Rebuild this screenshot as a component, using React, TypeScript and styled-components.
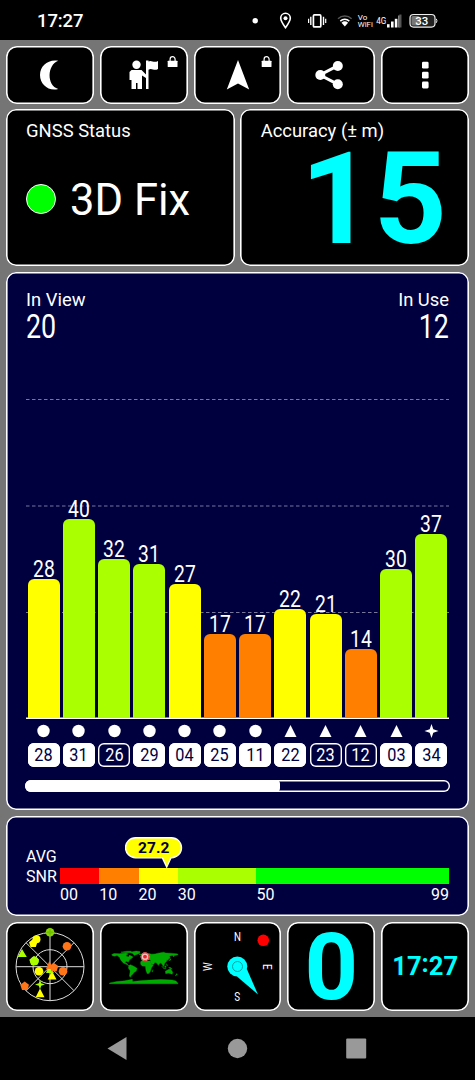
import React from "react";
import styled, { createGlobalStyle } from "styled-components";

const NAVY = "#00003f";
const CYAN = "#00ffff";
const YELLOW = "#ffff00";
const LIME = "#aaff00";
const ORANGE = "#ff8000";

const GlobalStyle = createGlobalStyle`
  * { box-sizing: border-box; }
  body { margin: 0; background: #000; font-family: Roboto, "Liberation Sans", sans-serif; color: #fff; }
  svg { display: block; }
`;

const Screen = styled.div`
  width: 475px;
  height: 1080px;
  display: flex;
  flex-direction: column;
  background: #000;
  overflow: hidden;
`;

const StatusBar = styled.header`
  height: 40px;
  display: flex;
  justify-content: space-between;
  align-items: center;
  padding: 1px 37px 0;
`;

const StatusTime = styled.span`
  font-size: 18.5px;
  font-weight: 500;
  line-height: 20px;
  letter-spacing: -0.1px;
`;

const Board = styled.main`
  height: 977px;
  padding: 6px 5.8px 0;
  background: #757575;
  display: grid;
  grid-template-rows: 57.8px 157px 538.4px 100.4px 89.4px;
  row-gap: 5.6px;
`;

const Row = styled.div<{ $cols: number }>`
  display: grid;
  grid-template-columns: repeat(${(p) => p.$cols}, 1fr);
  grid-template-rows: 100%;
  column-gap: 5.9px;
`;

const Panel = styled.section<{ $bg?: string; $radius?: number }>`
  background: ${(p) => p.$bg ?? "#000"};
  border-radius: ${(p) => p.$radius ?? 10}px;
  box-shadow: inset 0 0 0 1.6px #fff;
  min-width: 0;
`;

const StatusPanel = styled(Panel)`
  padding: 10.8px 20.3px 0;
`;

const Caption = styled.div`
  font-size: 18.4px;
  line-height: 21px;
  white-space: nowrap;
`;

const FixRow = styled.div`
  display: flex;
  align-items: center;
  gap: 14px;
  margin-top: 32px;
`;

const FixDot = styled.span`
  width: 30px;
  height: 30px;
  border-radius: 50%;
  background: #00ff00;
  border: 1px solid #fff;
`;

const FixText = styled.span`
  font-size: 43.5px;
  line-height: 48px;
  padding-top: 4px;
`;

const AccuracyValue = styled.div`
  font-size: 127.5px;
  font-weight: 700;
  line-height: 120px;
  color: ${CYAN};
  text-align: right;
  margin: -1.5px 2px 0 -10px;
`;

const ChartPanel = styled(Panel)`
  padding: 17.4px 20.2px 0;
  display: flex;
  flex-direction: column;
`;

const ChartHead = styled.div`
  display: flex;
  justify-content: space-between;
  height: 64.4px;
`;

const Count = styled.div<{ $right?: boolean }>`
  text-align: ${(p) => (p.$right ? "right" : "left")};
`;

const CountValue = styled.div<{ $right?: boolean }>`
  font-size: 32.3px;
  line-height: 34px;
  transform: scaleX(0.83);
  transform-origin: ${(p) => (p.$right ? "right" : "left")};
`;

const Plot = styled.div`
  height: 365.2px;
  display: grid;
`;

const GridLines = styled.svg`
  grid-area: 1 / 1;
  width: 423px;
  height: 365px;
`;

const Bars = styled.div`
  grid-area: 1 / 1;
  display: grid;
  grid-template-columns: repeat(12, 1fr);
  align-items: end;
  box-shadow: inset 0 -1.6px 0 #fff;
  padding-bottom: 1.4px;
`;

const BarColumn = styled.div`
  display: flex;
  flex-direction: column;
  align-items: center;
`;

const BarValue = styled.span`
  font-size: 23px;
  line-height: 18px;
  transform: scaleX(0.84);
`;

const Bar = styled.div<{ $value: number; $color: string }>`
  width: 32px;
  height: ${(p) => p.$value * 5 - 1}px;
  border-radius: 6px 6px 0 0;
  background: ${(p) => p.$color};
`;

const Satellites = styled.div`
  display: grid;
  grid-template-columns: repeat(12, 1fr);
  padding-top: 4.6px;
`;

const Satellite = styled.div`
  display: flex;
  flex-direction: column;
  align-items: center;
  gap: 5px;
`;

const SatId = styled.span<{ $used: boolean }>`
  width: 32px;
  height: 24.5px;
  border-radius: 6px;
  display: flex;
  align-items: center;
  justify-content: center;
  background: ${(p) => (p.$used ? "#fff" : NAVY)};
  color: ${(p) => (p.$used ? NAVY : "#fff")};
  box-shadow: inset 0 0 0 1.4px #fff;
  font-size: 18.7px;
  line-height: 22px;
  padding-top: 1px;
`;

const Narrow = styled.span`
  display: inline-block;
  transform: scaleX(0.87);
`;

const Progress = styled.div`
  margin: 13px -0.8px 0;
  height: 11.8px;
  border-radius: 6px;
  box-shadow: inset 0 0 0 1.4px #fff;
  overflow: hidden;
`;

const ProgressFill = styled.div`
  width: 60%;
  height: 100%;
  background: #fff;
  border-radius: 0 4px 4px 0;
`;

const SnrPanel = styled(Panel)`
  padding: 20px 20.2px 0;
  display: grid;
  grid-template-columns: 34px 1fr;
  grid-template-rows: 32px 16.4px 20px;
`;

const SnrLabel = styled.div`
  grid-row: 1 / 3;
  padding-top: 10.6px;
  font-size: 16px;
  line-height: 20.2px;
`;

const Segments = styled.div`
  grid-column: 2;
  display: grid;
  grid-template-columns: 39.2fr 39.4fr 39.2fr 78.8fr 192.6fr;
`;

const Segment = styled.div<{ $color: string }>`
  background: ${(p) => p.$color};
`;

const ScaleLabels = styled(Segments)`
  font-size: 16px;
  line-height: 21.4px;
`;

const LastLabels = styled.div`
  display: flex;
  justify-content: space-between;
`;

const BubbleArea = styled.div`
  grid-column: 2;
  padding-left: 65px;
`;

const Nav = styled.footer`
  height: 63px;
  display: flex;
  justify-content: center;
`;

const ReadoutPanel = styled(Panel)<{ $size: number }>`
  display: flex;
  align-items: center;
  justify-content: center;
  color: ${CYAN};
  font-size: ${(p) => p.$size}px;
  font-weight: 700;
  line-height: 1;
`;

const Speed = styled.span`
  padding-top: 2px;
`;

const Colon = styled.span`
  padding-bottom: 5px;
`;

type Shape = "circle" | "triangle" | "star";

const satellites: { id: string; snr: number; color: string; shape: Shape; used: boolean }[] = [
  { id: "28", snr: 28, color: YELLOW, shape: "circle", used: true },
  { id: "31", snr: 40, color: LIME, shape: "circle", used: true },
  { id: "26", snr: 32, color: LIME, shape: "circle", used: false },
  { id: "29", snr: 31, color: LIME, shape: "circle", used: true },
  { id: "04", snr: 27, color: YELLOW, shape: "circle", used: true },
  { id: "25", snr: 17, color: ORANGE, shape: "circle", used: true },
  { id: "11", snr: 17, color: ORANGE, shape: "circle", used: true },
  { id: "22", snr: 22, color: YELLOW, shape: "triangle", used: true },
  { id: "23", snr: 21, color: YELLOW, shape: "triangle", used: false },
  { id: "12", snr: 14, color: ORANGE, shape: "triangle", used: false },
  { id: "03", snr: 30, color: LIME, shape: "triangle", used: true },
  { id: "34", snr: 37, color: LIME, shape: "star", used: true },
];

const ShapeIcon = ({ shape }: { shape: Shape }) => (
  <svg width="15" height="14" viewBox="-7.5 -7 15 14" fill="#fff">
    {shape === "circle" && <circle r="6.2" />}
    {shape === "triangle" && <path d="M0-6L6 6H-6Z" />}
    {shape === "star" && <path d="M0-7L1.8-1.8L7 0L1.8 1.8L0 7L-1.8 1.8L-7 0L-1.8-1.8Z" />}
  </svg>
);

const Lock = ({ x }: { x: number }) => (
  <g transform={`translate(${x} 0)`}>
    <rect x="-4.9" y="14.7" width="9.8" height="6.4" rx="0.6" fill="#fff" />
    <path d="M-2.5 15V13.2a2.5 2.5 0 0 1 5 0V15" fill="none" stroke="#fff" strokeWidth="1.2" />
  </g>
);

const ToolIcon = ({ children }: { children: React.ReactNode }) => (
  <svg width="88" height="58" viewBox="0 0 88 58" fill="#fff">
    {children}
  </svg>
);

const StatusIcons = () => (
  <svg width="190" height="30" viewBox="248 5.5 190 30" fill="#fff">
    <circle cx="255.2" cy="20.3" r="2.7" />
    <path d="M285.5 27.2C282.5 23.2 280.7 20.4 280.7 17.6a4.8 4.8 0 0 1 9.6 0C290.3 20.4 288.5 23.2 285.5 27.2Z" fill="none" stroke="#fff" strokeWidth="1.6" />
    <circle cx="285.5" cy="17.7" r="2" />
    <g fill="none" stroke="#fff">
      <rect x="313.4" y="14.4" width="7.4" height="12" rx="1" strokeWidth="1.7" />
      <path d="M310.8 16.3V24.5M323.5 16.3V24.5" strokeWidth="1.4" />
      <path d="M308.6 18.3V22.5M325.7 18.3V22.5" strokeWidth="1.2" />
      <path d="M338 18.2a10 10 0 0 1 13.6 0" stroke="#555" strokeWidth="1.5" />
      <path d="M340.3 20.6a6.6 6.6 0 0 1 9 0" strokeWidth="1.5" />
    </g>
    <path d="M344.8 26L341.5 22.3a5 5 0 0 1 6.6 0Z" />
    <g fontFamily="Roboto, sans-serif">
      <text x="357.8" y="19.6" fontSize="7.5" textLength="9.5" lengthAdjust="spacingAndGlyphs">Vo</text>
      <text x="357.8" y="26.8" fontSize="7.5" textLength="15" lengthAdjust="spacingAndGlyphs">WiFi</text>
      <text x="376.3" y="23.5" fontSize="8.5" textLength="10" lengthAdjust="spacingAndGlyphs">4G</text>
      <rect x="410" y="14" width="25" height="12.6" rx="3.5" fill="#222" stroke="#eee" strokeWidth="1.2" />
      <rect x="411.5" y="15.5" width="8" height="9.6" rx="1.5" fill="#777" />
      <path d="M436.3 18.3q1.4 2 0 4" stroke="#eee" fill="none" />
      <text x="421.8" y="24.4" fontSize="11.5" fontWeight="500" textAnchor="middle">33</text>
    </g>
    <rect x="387" y="23.7" width="2.6" height="3.3" />
    <rect x="391" y="21" width="2.6" height="6" />
    <rect x="394.8" y="18.3" width="2.6" height="8.7" />
    <rect x="398.5" y="15" width="1" height="12" />
    <rect x="399.3" y="14" width="2.2" height="13" fill="#555" />
  </svg>
);

const SkyView = () => (
  <svg width="88" height="89" viewBox="6 922 88 89">
    <g fill="none" stroke="#ddd" strokeWidth="1">
      <circle cx="50" cy="966.7" r="34" />
      <circle cx="50" cy="966.7" r="17" />
      <path d="M50 932.7V1000.7M16 966.7H84M26 942.7L74 990.7M74 942.7L26 990.7" />
    </g>
    <g fill={YELLOW}>
      <circle cx="36.5" cy="939.3" r="4" />
      <circle cx="39" cy="971.3" r="4.3" />
      <path d="M33.2 939.1L37.4 942.2L35.8 947.1H30.6L29 942.2Z" />
      <path d="M52 971L56.5 979.5H47.7ZM40 988.5L44.5 997.2H35.7Z" />
    </g>
    <g fill={LIME}>
      <path d="M22 949L26.8 957H17.7ZM49 966L54 973H46Z" />
      <path d="M34 956L39 959.4L37.2 965H31.2L29.3 959.8Z" />
      <circle cx="34.5" cy="961" r="4.4" />
      <path d="M40 979.5L41.2 983.3L45 984.5L41.2 985.7L40 989.5L38.8 985.7L35 984.5L38.8 983.3Z" />
      <circle cx="50" cy="932.3" r="4.3" fill="#88d800" />
      <path d="M50 927.3L51 931.2L55 932.3L51 933.4L50 937.3L49 933.4L45 932.3L49 931.2Z" fill="#70c000" />
    </g>
    <g fill="#ff7518">
      <circle cx="67" cy="946.3" r="4.3" />
      <circle cx="63" cy="971.3" r="4.3" />
      <path d="M49.3 961L53.5 969H46Z" />
      <path d="M54 963L58.3 966L56.7 971.2H51.3L49.7 966ZM24.7 981.5L29 984.7L27.4 989.9H22L20.3 984.7Z" />
    </g>
  </svg>
);

const WorldMap = () => (
  <svg width="88" height="89" viewBox="100 922 88 89">
    <g transform="translate(143.7 967) scale(0.19 -0.19)" fill="#00aa00" stroke="#00aa00" strokeWidth="2">
      <path d="M-168 66L-156 71L-128 70L-110 73L-92 74L-82 68L-94 62L-90 57L-80 52L-76 62L-64 58L-56 52L-65 45L-75 38L-81 25L-90 30L-97 26L-96 18L-88 20L-83 9L-78 7L-92 14L-106 20L-117 32L-124 42L-126 50L-140 60L-155 57L-166 60Z" />
      <path d="M-120 78L-90 83L-65 83L-68 76L-90 75ZM-72 78L-40 84L-20 82L-20 73L-40 65L-50 61L-55 69ZM-24 65H-14V67H-24Z" />
      <path d="M-78 8L-70 12L-52 4L-35 -7L-40 -22L-50 -28L-58 -38L-66 -45L-70 -54L-75 -48L-71 -20L-81 -5Z" />
      <path d="M-16 15L-16 28L-6 36L10 37L20 31L33 31L43 12L51 11L40 -5L35 -22L27 -34L18 -34L12 -18L9 4L-8 5Z" />
      <path d="M-9 37V43L0 45L-4 48L5 53L10 58L5 60L15 69L28 71L42 67L60 69L75 73L105 78L115 74L140 73L170 70L180 68V65L162 60L158 52L155 60L142 59L135 54L140 48L130 42L128 35L122 38L121 30L110 20L108 10L104 2L98 12L90 22L80 15L77 8L70 20L60 25L52 15L43 13L34 28L36 37L26 38L22 37L14 44L18 40L12 42L4 42L0 38Z" />
      <path d="M-5 50H1L-3 58L-7 56ZM132 33L141 36L143 43L139 42L137 36ZM44 -25L49 -14L46 -26ZM95 5L106 -6L118 -8H105ZM109 2L118 6L116 -4ZM120 18L126 8L122 8ZM131 -2L141 -3L150 -10L138 -8Z" />
      <path d="M114 -22L130 -13L137 -12L142 -11L153 -28L150 -38L138 -34L130 -32L116 -35ZM173 -35L178 -38L167 -47Z" />
      <path d="M-180 -84L-140 -76L-100 -73L-60 -65L-58 -76L-20 -72L30 -69L90 -66L150 -68L170 -74L175 -80L180 -84V-88H-180Z" />
    </g>
    <circle cx="145" cy="956.7" r="4.3" fill="#fff" />
    <circle cx="145" cy="956.7" r="3.8" fill="#f5c5c5" stroke="#ee3d3d" strokeWidth="1.1" />
    <circle cx="145" cy="956.7" r="1.9" fill="#ee2525" />
  </svg>
);

const Compass = () => (
  <svg width="88" height="89" viewBox="194 922 88 89" fill="#fff">
    <g fontFamily="Roboto, sans-serif" fontSize="12.5" textAnchor="middle">
      <text transform="translate(237.5 941) scale(.78 1)">N</text>
      <text transform="translate(262.8 966.8) rotate(90) scale(.78 1)">E</text>
      <text transform="translate(237.3 992.3) rotate(180) scale(.78 1)">S</text>
      <text transform="translate(211.8 966.8) rotate(-90) scale(.78 1)">W</text>
    </g>
    <circle cx="263.3" cy="940.3" r="5.8" fill="red" />
    <circle cx="237.3" cy="966.5" r="10" fill={CYAN} />
    <path d="M237 976.5L246.8 969L258 994.5Z" fill={CYAN} />
    <circle cx="237.5" cy="966.5" r="5" fill="none" stroke="#008c8c" strokeWidth="0.8" />
  </svg>
);

export default function App() {
  return (
    <>
      <GlobalStyle />
      <Screen>
        <StatusBar>
          <StatusTime>17:27</StatusTime>
          <StatusIcons />
        </StatusBar>
        <Board>
          <Row $cols={5}>
            <Panel $radius={11}>
              <ToolIcon>
                <path d="M52.2 14.8C42 13 34 20 34 29C34 38.5 42.5 45.5 52.2 43C40.5 39.5 41 19 52.2 14.8Z" />
              </ToolIcon>
            </Panel>
            <Panel $radius={11}>
              <ToolIcon>
                <circle cx="36.5" cy="18.8" r="4.2" />
                <path d="M31.5 24H41.5L46 28.5V14.5H48.5V15.5C51.5 13.5 53.5 17.5 58 15V23C54 25.5 52 21.5 48.5 23.7V43H46V32L42 29.5V43H37.5V37H36V43H31.5V34H29.5V26Z" />
                <Lock x={72.6} />
              </ToolIcon>
            </Panel>
            <Panel $radius={11}>
              <ToolIcon>
                <path d="M44 14L55.2 43.5L44 37.5L32.8 43.5Z" />
                <Lock x={72.6} />
              </ToolIcon>
            </Panel>
            <Panel $radius={11}>
              <ToolIcon>
                <path d="M50.5 19.8L33 29L50.5 38.2" fill="none" stroke="#fff" strokeWidth="3" />
                <circle cx="50.8" cy="20" r="5" />
                <circle cx="33.3" cy="29" r="5" />
                <circle cx="50.8" cy="38.3" r="5" />
              </ToolIcon>
            </Panel>
            <Panel $radius={11}>
              <ToolIcon>
                <rect x="41" y="15.8" width="6.6" height="6.8" rx="1.3" />
                <rect x="41" y="25.7" width="6.6" height="6.8" rx="1.3" />
                <rect x="41" y="35.6" width="6.6" height="6.8" rx="1.3" />
              </ToolIcon>
            </Panel>
          </Row>

          <Row $cols={2}>
            <StatusPanel>
              <Caption>GNSS Status</Caption>
              <FixRow>
                <FixDot />
                <FixText>3D Fix</FixText>
              </FixRow>
            </StatusPanel>
            <StatusPanel>
              <Caption>Accuracy (± m)</Caption>
              <AccuracyValue>15</AccuracyValue>
            </StatusPanel>
          </Row>

          <ChartPanel $bg={NAVY}>
            <ChartHead>
              <Count>
                <Caption>In View</Caption>
                <CountValue>20</CountValue>
              </Count>
              <Count $right>
                <Caption>In Use</Caption>
                <CountValue $right>12</CountValue>
              </Count>
            </ChartHead>
            <Plot>
              <GridLines viewBox="0 0 423 365">
                <path d="M0 45.5H423M0 152H423M0 258.5H423" stroke="#77779c" strokeWidth="1" strokeDasharray="3.5 2.5" />
              </GridLines>
              <Bars>
                {satellites.map((s) => (
                  <BarColumn key={s.id}>
                    <BarValue>{s.snr}</BarValue>
                    <Bar $value={s.snr} $color={s.color} />
                  </BarColumn>
                ))}
              </Bars>
            </Plot>
            <Satellites>
              {satellites.map((s) => (
                <Satellite key={s.id}>
                  <ShapeIcon shape={s.shape} />
                  <SatId $used={s.used}>
                    <Narrow>{s.id}</Narrow>
                  </SatId>
                </Satellite>
              ))}
            </Satellites>
            <Progress>
              <ProgressFill />
            </Progress>
          </ChartPanel>

          <SnrPanel $bg={NAVY}>
            <SnrLabel>
              AVG
              <br />
              SNR
            </SnrLabel>
            <BubbleArea>
              <svg width="58" height="32" viewBox="125 836 58 32">
                <path d="M135.5 837.7H171.5a10 10 0 0 1 0 20H171L166.7 867L162.3 857.7H135.5a10 10 0 0 1 0 -20Z" fill={YELLOW} stroke="#fff" strokeWidth="1.4" />
                <text x="153.7" y="853" textAnchor="middle" fontFamily="Roboto, sans-serif" fontSize="15.5" fontWeight="700" fill={NAVY}>
                  27.2
                </text>
              </svg>
            </BubbleArea>
            <Segments>
              <Segment $color="#ff0000" />
              <Segment $color={ORANGE} />
              <Segment $color={YELLOW} />
              <Segment $color={LIME} />
              <Segment $color="#00ff00" />
            </Segments>
            <ScaleLabels>
              <span>00</span>
              <span>10</span>
              <span>20</span>
              <span>30</span>
              <LastLabels>
                <span>50</span>
                <span>99</span>
              </LastLabels>
            </ScaleLabels>
          </SnrPanel>

          <Row $cols={5}>
            <Panel $radius={11}>
              <SkyView />
            </Panel>
            <Panel $radius={11}>
              <WorldMap />
            </Panel>
            <Panel $radius={11}>
              <Compass />
            </Panel>
            <ReadoutPanel $radius={11} $size={93.5}>
              <Speed>0</Speed>
            </ReadoutPanel>
            <ReadoutPanel $radius={11} $size={25.6}>
              <span>17</span>
              <Colon>:</Colon>
              <span>27</span>
            </ReadoutPanel>
          </Row>
        </Board>
        <Nav>
          <svg width="475" height="63" viewBox="0 1017 475 63" fill="#999">
            <path d="M107.5 1048.5L126.5 1037V1060Z" />
            <circle cx="237.5" cy="1048.5" r="9.7" />
            <rect x="346.2" y="1038.5" width="20" height="20" rx="1" />
          </svg>
        </Nav>
      </Screen>
    </>
  );
}
